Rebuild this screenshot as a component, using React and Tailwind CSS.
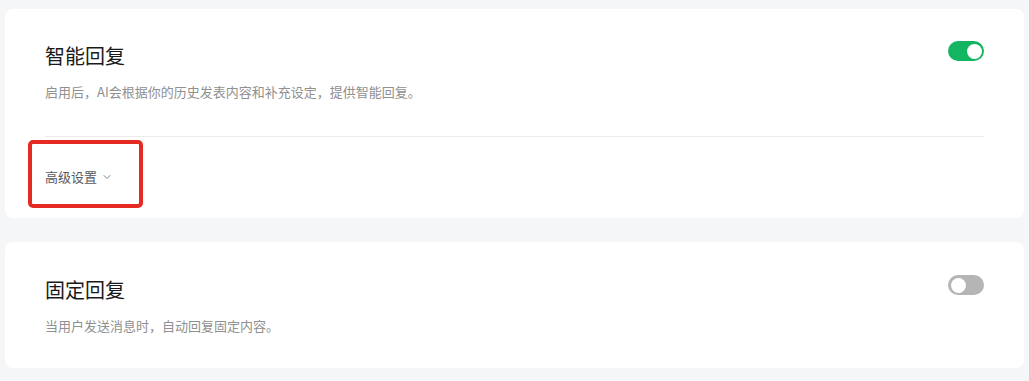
import { ChevronDown } from "lucide-react";
import { useState } from "react";

const Toggle = ({ on, onChange }) => (
  <button
    onClick={() => onChange(!on)}
    className={`-mt-[1px] flex h-[20px] w-[36px] shrink-0 items-center rounded-full px-[2.5px] ${
      on ? "justify-end bg-[#14b560]" : "justify-start bg-[#b5b5b5]"
    }`}
  >
    <span className="block h-[15px] w-[15px] rounded-full bg-white" />
  </button>
);

const SettingCard = ({ title, desc, on, onChange, children }) => (
  <div className="px-[40px]">
    <div className="flex items-start justify-between">
      <div className="flex flex-col">
        <h2 className="text-[20px] leading-[28px] text-[#1a1a1a]">{title}</h2>
        <p className="mt-[12px] text-[13px] leading-[20px] text-[#909090]">{desc}</p>
      </div>
      <Toggle on={on} onChange={onChange} />
    </div>
    {children}
  </div>
);

const App = () => {
  const [smart, setSmart] = useState(true);
  const [fixed, setFixed] = useState(false);

  return (
    <div
      className="min-h-[381px] w-full bg-[#f5f6f7] px-[5px] pt-[9px] pb-[13px]"
      style={{ fontFamily: '"Noto Sans CJK SC", "Noto Sans", sans-serif' }}
    >
      <div className="flex flex-col gap-[24px]">
        <div className="rounded-lg bg-white pt-[33px] pb-[31px]">
          <SettingCard title="智能回复" desc="启用后，AI会根据你的历史发表内容和补充设定，提供智能回复。" on={smart} onChange={setSmart}>
            <div className="mt-[34px] border-t border-[#ebebeb]" />
            <div className="relative mt-[30px] inline-flex items-center gap-[4px] text-[13px] leading-[20px] text-[#555a60]">
              <span>高级设置</span>
              <ChevronDown size={12} strokeWidth={1.75} className="text-[#6b7078]" />
              <span className="pointer-events-none absolute -left-[17px] -top-[27px] h-[68px] w-[115px] rounded-[5px] border-[4px] border-[#e52a22]" />
            </div>
          </SettingCard>
        </div>
        <div className="rounded-lg bg-white pt-[34px] pb-[32px]">
          <SettingCard title="固定回复" desc="当用户发送消息时，自动回复固定内容。" on={fixed} onChange={setFixed} />
        </div>
      </div>
    </div>
  );
};

export default App;
